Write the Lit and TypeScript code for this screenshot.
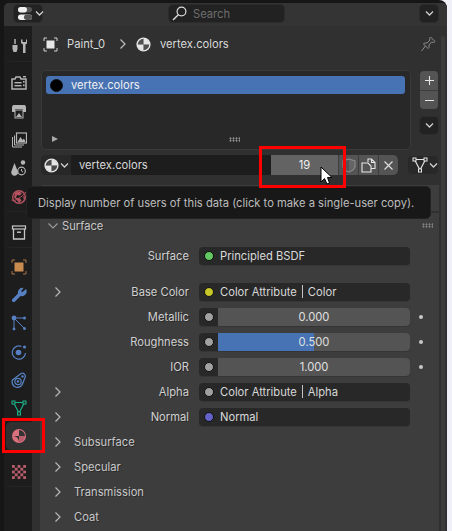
import { LitElement, html, css, svg } from "lit";
import { customElement } from "lit/decorators.js";

const chevD = svg`<path d="M1 1.5 L4.5 5 L8 1.5" fill="none" stroke="currentColor" stroke-width="1.3"/>`;
const chevDown = html`<svg class="chev" width="9" height="7" viewBox="0 0 9 7">${chevD}</svg>`;
const chevRight = html`<svg class="chevr" width="8" height="12" viewBox="0 0 8 12"><path d="M1.5 1.5 L6 6 L1.5 10.5" fill="none" stroke="currentColor" stroke-width="1.2"/></svg>`;

const matIcon = (fg = "#e6e6e6") => svg`
  <circle cx="7.5" cy="7.5" r="6.4" fill="none" stroke="${fg}" stroke-width="1.4"/>
  <path d="M7.5 1.5 A6 6 0 0 1 13.5 7.5 L7.5 7.5 Z M7.5 7.5 L1.5 7.5 A6 6 0 0 0 7.5 13.5 Z" fill="${fg}"/>
  <path d="M7.5 1.5 A6 6 0 0 0 1.5 7.5 L7.5 7.5 Z M7.5 7.5 L13.5 7.5 A6 6 0 0 1 7.5 13.5 Z" fill="${fg}" opacity=".18"/>`;

const matTab = svg`
  <circle cx="8" cy="8" r="7" fill="#d9707e"/>
  <path d="M8 2 A6 6 0 0 1 14 8 L8 8 Z M8 8 L2 8 A6 6 0 0 1 8 14 Z" fill="#333"/>
  <path d="M8 8 L14 8 A6 6 0 0 1 8 14 Z" fill="#b85d6a"/>`;

const triMesh = (c: string) => svg`
  <path d="M2.5 2.5 H13.5 L8 13 Z" fill="none" stroke="${c}" stroke-width="1.1"/>
  <rect x="1" y="1" width="3" height="3" fill="#282828" stroke="${c}"/>
  <rect x="12" y="1" width="3" height="3" fill="#282828" stroke="${c}"/>
  <rect x="6.5" y="12" width="3" height="3" fill="#282828" stroke="${c}"/>`;

const G = "#b5b5b5";
const B = "#5680c2";
const tabs = [
  { gap: 0, sep: true, icon: svg`
    <path d="M4 0 V5" stroke="${G}" stroke-width="1.5"/>
    <path d="M1.5 6 H6.5 V10 L5.5 13 H2.5 L1.5 10 Z" fill="${G}"/>
    <path d="M10 0.5 V4 L12 5.5 V14 H14.5 V5.5 L16.5 4 V0.5 L15 0.5 V3 H11.5 V0.5 Z" fill="${G}"/>` },
  { gap: 8, icon: svg`
    <path d="M1 4 H4 L5 2 H9 L10 4 H15 V14 H1 Z" fill="none" stroke="${G}" stroke-width="1.5"/>
    <rect x="3.5" y="7" width="7" height="1.4" fill="${G}"/><rect x="3.5" y="10" width="7" height="1.4" fill="${G}"/>
    <rect x="12" y="6" width="1.6" height="1.6" fill="${G}"/><rect x="12" y="9.5" width="1.6" height="1.6" fill="${G}"/>
    <rect x="12" y="1" width="3" height="1.4" fill="${G}"/>` },
  { gap: 1, icon: svg`
    <path d="M2 1 H14 L15 3 V8 H12 V5 H4 V8 H1 V3 Z" fill="${G}"/>
    <rect x="4" y="6" width="8" height="8" fill="#1d1d1d" stroke="${G}"/>
    <path d="M5 13 L8 9 L11 13 Z" fill="${G}"/>` },
  { gap: 0, icon: svg`
    <path d="M1.5 5 V15 H11" fill="none" stroke="${G}" stroke-width="1"/>
    <path d="M3.5 3.5 V13 H13" fill="none" stroke="${G}" stroke-width="1"/>
    <rect x="5.5" y="1" width="10" height="10" fill="none" stroke="${G}" stroke-width="1.2"/>
    <path d="M6.5 10 L9.5 5 L11.5 8 L13 6.5 L14.5 10 Z" fill="${G}"/>` },
  { gap: 0, icon: svg`
    <path d="M4 3 L7.5 12 A3.4 3.4 0 1 1 1 11 Z" fill="${G}" transform="translate(-0.5 0)"/>
    <circle cx="12" cy="2.5" r="2.2" fill="${G}"/>
    <circle cx="10.5" cy="11" r="3.8" fill="none" stroke="${G}" stroke-width="1.2"/>
    <path d="M10.5 9 V11 L12 12" fill="none" stroke="${G}"/>` },
  { gap: 1, sep: true, icon: svg`
    <circle cx="8" cy="8" r="6.3" fill="none" stroke="#b5525f" stroke-width="1.4"/>
    <path d="M4 3.5 L8 2.5 L11 4 L9 6.5 L6 6 L5 9 L8.5 9 L10.5 11.5 L8 14 L6 11 L3 8.5 Z M12 7 L14 8 L13 11 Z" fill="#b5525f"/>
    <path d="M0.5 11 C4 13 11 8 15 3" fill="none" stroke="#b5525f"/>`, },
  { gap: 8, sep: true, icon: svg`
    <rect x="1.5" y="1" width="13" height="3" fill="none" stroke="#c8c8c8" stroke-width="1.2"/>
    <path d="M2.5 4 V14 H13.5 V4" fill="none" stroke="#c8c8c8" stroke-width="1.3"/>
    <rect x="6" y="6.5" width="4" height="1.4" fill="#c8c8c8"/>` },
  { gap: 6, icon: svg`
    <rect x="3.5" y="3.5" width="9" height="9" fill="#c98a4f"/>
    <path d="M1 4 V1 H4 M12 1 H15 V4 M15 12 V15 H12 M4 15 H1 V12" fill="none" stroke="#a9744a" stroke-width="1"/>` },
  { gap: 0, icon: svg`
    <path d="M15 2 L11.5 5 L10 4.2 L12.5 1 A4.6 4.6 0 0 0 7 6.5 L1 12.5 A2 2 0 0 0 3.5 15 L9.5 9 A4.8 4.8 0 0 0 15 2 Z" fill="${B}"/>` },
  { gap: 0, icon: svg`
    <circle cx="3" cy="3" r="2.4" fill="${B}"/><circle cx="13.5" cy="3" r="1.5" fill="${B}"/>
    <circle cx="3" cy="14" r="1.4" fill="${B}"/><circle cx="13.5" cy="13.5" r="1.5" fill="${B}"/>
    <path d="M3 3 H13 M3 3 V14 M3 3 L13.5 13.5" stroke="${B}" stroke-width="1"/>` },
  { gap: 1, icon: svg`
    <circle cx="7.5" cy="8.5" r="2.8" fill="${B}"/><circle cx="13.5" cy="3" r="1.6" fill="${B}"/>
    <path d="M10.5 2.5 A6.6 6.6 0 1 0 14.5 9" fill="none" stroke="${B}" stroke-width="1.2"/>` },
  { gap: 0, icon: svg`
    <path d="M1.5 8 L10 1.5 A3 3 0 0 1 14 5.5 L11.5 12 A5.3 5.3 0 0 1 1.5 8 Z" fill="none" stroke="${B}" stroke-width="1.3"/>
    <circle cx="7" cy="9.5" r="3.2" fill="none" stroke="${B}" stroke-width="1.2"/><circle cx="7" cy="9.5" r="1.3" fill="${B}"/>
    <circle cx="11.5" cy="4.5" r="1.2" fill="${B}"/>` },
  { gap: 0, icon: triMesh("#19b58a") },
  { gap: 0, active: true, icon: matTab },
  { gap: 8, sep: true, icon: svg`
    <rect x="1" y="1" width="14" height="14" fill="#b85d6a"/>
    ${[0, 1, 2, 3, 4].flatMap((r) => [0, 1, 2, 3, 4].filter((c) => (r + c) % 2 === 1).map((c) => svg`<rect x="${1 + c * 2.8}" y="${1 + r * 2.8}" width="2.8" height="2.8" fill="#1d1d1d"/>`))}` },
];

type Row =
  | { kind: "link"; label: string; sock: string; text: string; suffix?: string }
  | { kind: "slider"; label: string; value: string; fill?: number }
  | { kind: "sub"; label: string };

const rows: Row[] = [
  { kind: "link", label: "Base Color", sock: "#c7c729", text: "Color Attribute", suffix: "Color" },
  { kind: "slider", label: "Metallic", value: "0.000" },
  { kind: "slider", label: "Roughness", value: "0.500", fill: 50 },
  { kind: "slider", label: "IOR", value: "1.000" },
  { kind: "link", label: "Alpha", sock: "#a1a1a1", text: "Color Attribute", suffix: "Alpha" },
  { kind: "link", label: "Normal", sock: "#6363c7", text: "Normal" },
  { kind: "sub", label: "Subsurface" },
  { kind: "sub", label: "Specular" },
  { kind: "sub", label: "Transmission" },
  { kind: "sub", label: "Coat" },
];

const grip = html`<span class="grip"></span>`;

@customElement("app-root")
export class AppRoot extends LitElement {
  static styles = css`
    :host { display: block; width: 452px; height: 531px; overflow: hidden; position: relative; background: #f0f0f8;
      font-family: Inter, "Liberation Sans", sans-serif; font-size: 11.2px; color: #d9d9d9; }
    * { box-sizing: border-box; }
    svg { display: block; flex: none; }
    .win { width: 447px; height: 531px; background: #161616; padding: 3px 0 0 4px; border-radius: 0 8px 0 0; overflow: hidden; }
    .editor { width: 443px; height: 528px; background: #303030; border-radius: 5px 5px 0 0; overflow: hidden; display: flex; flex-direction: column; }
    .hdr { height: 23px; flex: none; background: #343434; display: flex; align-items: flex-start; padding: 1px 0 0 9px; }
    .hbtn { height: 19px; background: #222; border: 1px solid #2c2c2c; border-radius: 5px; display: flex; align-items: center; }
    .type { width: 30px; padding-left: 4px; gap: 2px; }
    .search { width: 117px; margin-left: 125px; padding-left: 3px; gap: 6px; color: #6e6e6e; }
    .hmenu { width: 20px; margin-left: 134px; justify-content: center; }
    .chev { color: #d0d0d0; }
    .body { flex: 1; display: flex; min-height: 0; }
    .tabs { width: 28px; flex: none; background: #1d1d1d; padding-top: 7px; display: flex; flex-direction: column; }
    .tab { height: 28px; display: flex; align-items: center; justify-content: center; flex: none; margin-left: 2px; width: 26px; border-radius: 5px 0 0 5px; }
    .tab.active { background: #303030; }
    .tab.sep { box-shadow: 0 1px 0 #262626; }
    .main { flex: 1; min-width: 0; display: flex; }
    .content { width: 407px; flex: none; display: flex; flex-direction: column; }
    .scroll { width: 8px; flex: none; padding: 10px 2px 0 2px; }
    .scroll i { display: block; height: 100%; background: #3c3c3c; border-radius: 3px 3px 0 0; }
    .crumb { height: 30px; margin-top: 3px; display: flex; align-items: center; padding-left: 11px; flex: none; }
    .crumb .nm1 { margin-left: 9px; width: 52px; }
    .crumb .mat { margin-left: 9px; }
    .crumb .nm2 { margin-left: 9px; flex: 1; }
    .crumb .pin { margin-right: 3px; }
    .crumb .sepc { color: #c0c0c0; }
    .listrow { display: flex; margin-top: 11px; padding-left: 9px; flex: none; }
    .list { width: 371px; height: 80px; background: #282828; border: 1px solid #3a3a3a; border-radius: 5px; padding: 5px 5px 0 4px; position: relative; display: flex; flex-direction: column; }
    .sel { height: 18px; background: #4772b3; border-radius: 3px; display: flex; align-items: center; padding-left: 4px; gap: 8px; color: #f0f0f0; flex: none; }
    .sel i { width: 13px; height: 13px; border-radius: 50%; background: #000; border: 1px solid #111; }
    .lfoot { margin-top: auto; height: 18px; display: flex; align-items: center; padding: 0 0 2px 6px; }
    .lfoot b { width: 0; height: 0; border-left: 6px solid #aaa; border-top: 3.5px solid transparent; border-bottom: 3.5px solid transparent; }
    .lfoot .g2 { margin-left: 171px; width: 11px; height: 5px; background-image: radial-gradient(#a0a0a0 45%, transparent 50%); background-size: 3px 2.5px; }
    .side { width: 20px; margin-left: 8px; display: flex; flex-direction: column; padding-top: 1px; }
    .pm { width: 18px; margin-left: 1px; height: 38px; background: #545454; border-radius: 4px; display: flex; flex-direction: column; overflow: hidden; flex: none; }
    .pm div { height: 19px; display: flex; align-items: center; justify-content: center; }
    .pm div + div { border-top: 1px solid #3d3d3d; }
    .side .hbtn { width: 20px; margin-top: 7px; justify-content: center; }
    .data { display: flex; height: 20px; margin-top: 5px; padding-left: 9px; flex: none; }
    .dmat { width: 31px; background: #282828; border-radius: 5px 0 0 5px; display: flex; align-items: center; padding-left: 3px; gap: 1px; border-right: 1px solid #1d1d1d; }
    .dname { width: 199px; background: #1d1d1d; display: flex; align-items: center; padding-left: 7px; }
    .dusers { width: 67px; background: #636363; display: flex; align-items: center; justify-content: center; color: #f0f0f0; }
    .dbtn { width: 20px; background: #545454; display: flex; align-items: center; justify-content: center; border-left: 1px solid #3d3d3d; }
    .dbtn.end { border-radius: 0 5px 5px 0; }
    .dtype { width: 32px; margin-left: 9px; background: #282828; border: 1px solid #303030; border-radius: 5px; display: flex; align-items: center; padding-left: 4px; gap: 1px; }
    .panel { margin-top: 10px; background: #3d3d3d; border-radius: 4px 0 0 0; margin-left: 8px; height: 26px; flex: none; }
    .panel.surface { margin-top: 2px; flex: 1; min-height: 0; overflow: hidden; height: auto; }
    .phead { height: 25px; display: flex; align-items: center; padding: 0 6px 0 7px; gap: 3px; flex: none; color: #c8c8c8; text-shadow: 1px 1px 0 rgba(0,0,0,.35); }
    .phead span { flex: 1; }
    .chev2 { color: #9a9a9a; }
    .grip { display: block; width: 11px; height: 5px; background-image: radial-gradient(#8c8c8c 45%, transparent 50%); background-size: 3px 2.5px; flex: none !important; }
    .rows { display: flex; flex-direction: column; padding-top: 5px; }
    .r { height: 25px; display: flex; align-items: center; padding-left: 14px; position: relative; flex: none; }
    .r .ex { width: 8px; color: #b8b8b8; flex: none; }
    .lab { width: 127px; text-align: right; color: #d0d0d0; text-shadow: 1px 1px 0 rgba(0,0,0,.35); flex: none; }
    .r .field { margin-left: 10px; width: 211px; height: 18px; background: #282828; border-radius: 4px; box-shadow: 0 1px 0 #353535; display: flex; align-items: center; overflow: hidden; flex: none; }
    .sock { width: 19px; flex: none; display: flex; align-items: center; justify-content: center; }
    .sock i { width: 10px; height: 10px; border-radius: 50%; border: 1px solid #111; }
    .field .tx { color: #d9d9d9; padding-left: 2px; white-space: pre; display: flex; align-items: center; }
    .field .bar { width: 1px; height: 13px; background: #c4c4c4; margin: 0 5px; }
    .slider { flex: 1; height: 18px; background: #545454; position: relative; display: flex; align-items: center; justify-content: center; color: #e0e0e0; }
    .fillb { position: absolute; left: 0; top: 0; bottom: 0; background: #4772b3; }
    .slider span { position: relative; }
    .dot { width: 4px; height: 4px; border-radius: 50%; background: #c8c8c8; margin-left: 9px; flex: none; }
    .sub { padding-left: 14px; }
    .sub .t { margin-left: 12px; color: #c8c8c8; text-shadow: 1px 1px 0 rgba(0,0,0,.35); }
    .tooltip { position: absolute; left: 26px; top: 186px; width: 405px; height: 33px; background: #181818; border: 1px solid #232323; border-radius: 5px; display: flex; align-items: center; padding-left: 11px; color: #bdbdbd; white-space: nowrap; }
    .redbox { position: absolute; border: 3px solid #f00; }
    .r1 { left: 259px; top: 146px; width: 87px; height: 42px; }
    .r2 { left: 2px; top: 418px; width: 43px; height: 35px; }
    .cursor { position: absolute; left: 320px; top: 166px; }
  `;

  render() {
    return html`
      <div class="win"><div class="editor">
        <div class="hdr">
          <div class="hbtn type">
            <svg width="15" height="15" viewBox="0 0 15 15">
              <rect x="0" y="1" width="14" height="5.5" rx="2.7" fill="#555"/><rect x="0" y="1" width="9" height="5.5" rx="2.7" fill="#f0f0f0"/>
              <rect x="0" y="8.5" width="14" height="5.5" rx="2.7" fill="#f0f0f0"/><rect x="6" y="8.5" width="8" height="5.5" rx="2.7" fill="#555"/>
            </svg>${chevDown}
          </div>
          <div class="hbtn search">
            <svg width="15" height="15" viewBox="0 0 15 15"><circle cx="9.5" cy="5.5" r="4.4" fill="none" stroke="#dcdcdc" stroke-width="1.2"/><path d="M6.3 8.7 L1 14" stroke="#dcdcdc" stroke-width="1.4"/></svg>
            <span>Search</span>
          </div>
          <div class="hbtn hmenu">${chevDown}</div>
        </div>
        <div class="body">
          <div class="tabs">
            ${tabs.map((t) => html`<div class="tab ${t.active ? "active" : ""} ${t.sep ? "sep" : ""}" style="margin-top:${t.gap}px">
              <svg width="16" height="16" viewBox="0 0 16 16">${t.icon}</svg></div>`)}
          </div>
          <div class="main">
            <div class="content">
              <div class="crumb">
                <svg width="15" height="15" viewBox="0 0 15 15"><rect x="3.5" y="3.5" width="8" height="8" fill="#e6e6e6"/><path d="M1 4 V1 H4 M11 1 H14 V4 M14 11 V14 H11 M4 14 H1 V11" fill="none" stroke="#cfcfcf" stroke-width="1"/></svg>
                <span class="nm1">Paint_0</span>
                <span class="sepc">${chevRight}</span>
                <svg class="mat" width="15" height="15" viewBox="0 0 15 15">${matIcon()}</svg>
                <span class="nm2">vertex.colors</span>
                <svg class="pin" width="15" height="16" viewBox="0 0 15 16"><path d="M9.5 1 L14 5.5 L12.5 6.5 L10.5 6 L8 9 L8 11.5 L7 12.5 L2.5 8 L3.5 7 L6 7 L9 4 L8.5 2.5 Z M4.5 10 L0.5 15" fill="none" stroke="#8c8c8c" stroke-width="1"/></svg>
              </div>
              <div class="listrow">
                <div class="list">
                  <div class="sel"><i></i>vertex.colors</div>
                  <div class="lfoot"><b></b><span class="g2"></span></div>
                </div>
                <div class="side">
                  <div class="pm">
                    <div><svg width="11" height="11" viewBox="0 0 11 11"><path d="M5.5 1 V10 M1 5.5 H10" stroke="#e6e6e6" stroke-width="1.1"/></svg></div>
                    <div><svg width="11" height="11" viewBox="0 0 11 11"><path d="M1 5.5 H10" stroke="#e6e6e6" stroke-width="1.1"/></svg></div>
                  </div>
                  <div class="hbtn">${chevDown}</div>
                </div>
              </div>
              <div class="data">
                <div class="dmat"><svg width="15" height="15" viewBox="0 0 15 15">${matIcon()}</svg>${chevDown}</div>
                <div class="dname">vertex.colors</div>
                <div class="dusers">19</div>
                <div class="dbtn"><svg width="14" height="15" viewBox="0 0 14 15"><path d="M7 1 L13 3 V8 C13 11 10 13 7 14 C4 13 1 11 1 8 V3 Z" fill="none" stroke="#8a8a8a" stroke-width="1.2"/><path d="M7 1 L13 3 V8 C13 11 10 13 7 14 Z" fill="#8a8a8a" opacity=".3"/></svg></div>
                <div class="dbtn"><svg width="15" height="15" viewBox="0 0 15 15"><path d="M7 4 V1 H10.5 L14 4.5 V10.5 H10 M1 5 H7 L10 8 V14 H1 Z M10.5 1 V4.5 H14" fill="none" stroke="#e6e6e6" stroke-width="1.1"/></svg></div>
                <div class="dbtn end"><svg width="11" height="11" viewBox="0 0 11 11"><path d="M1.5 1.5 L9.5 9.5 M9.5 1.5 L1.5 9.5" stroke="#e0e0e0" stroke-width="1.1"/></svg></div>
                <div class="dtype"><svg width="16" height="16" viewBox="0 0 16 16">${triMesh("#e6e6e6")}</svg>${chevDown}</div>
              </div>
              <div class="panel"></div>
              <div class="panel surface">
                <div class="phead"><svg class="chev2" width="12" height="8" viewBox="0 0 12 8"><path d="M1.5 1.5 L6 6 L10.5 1.5" fill="none" stroke="currentColor" stroke-width="1.2"/></svg><span>Surface</span>${grip}</div>
                <div class="rows">
                  <div class="r"><span class="ex"></span><span class="lab">Surface</span>
                    <div class="field"><div class="sock"><i style="background:#63c763"></i></div><span class="tx">Principled BSDF</span></div></div>
                  <div style="height:11px"></div>
                  ${rows.map((r) => {
                    if (r.kind === "sub") return html`<div class="r sub"><span class="ex">${chevRight}</span><span class="t">${r.label}</span></div>`;
                    if (r.kind === "link") return html`<div class="r"><span class="ex">${chevRight}</span><span class="lab">${r.label}</span>
                      <div class="field"><div class="sock"><i style="background:${r.sock}"></i></div><span class="tx">${r.text}${r.suffix ? html`<span class="bar"></span>${r.suffix}` : ""}</span></div></div>`;
                    return html`<div class="r"><span class="ex"></span><span class="lab">${r.label}</span>
                      <div class="field"><div class="sock"><i style="background:#a1a1a1"></i></div>
                        <div class="slider">${r.fill ? html`<div class="fillb" style="width:${r.fill}%"></div>` : ""}<span>${r.value}</span></div></div>
                      <span class="dot"></span></div>`;
                  })}
                </div>
              </div>
            </div>
            <div class="scroll"><i></i></div>
          </div>
        </div>
      </div></div>
      <div class="tooltip">Display number of users of this data (click to make a single-user copy).</div>
      <div class="redbox r1"></div>
      <div class="redbox r2"></div>
      <svg class="cursor" width="14" height="20" viewBox="0 0 14 20"><path d="M1 1 V16 L4.5 12.5 L7 18 L9.5 17 L7.5 11.5 L12 11.5 Z" fill="#fff" stroke="#000" stroke-width="1"/></svg>
    `;
  }
}
